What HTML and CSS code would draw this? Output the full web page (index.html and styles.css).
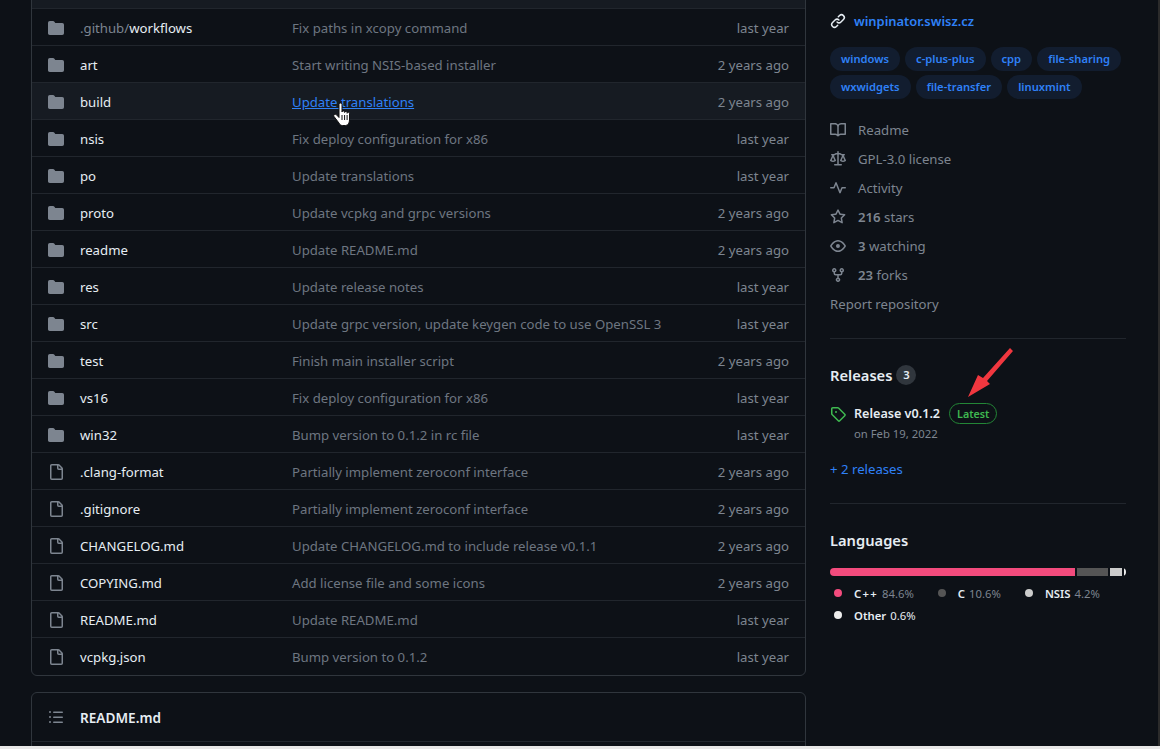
FILE: index.html
```html
<!DOCTYPE html>
<html lang="en">
<head>
<meta charset="utf-8">
<title>Winpinator</title>
<link rel="stylesheet" href="styles.css">
</head>
<body>
<svg class="defs" width="0" height="0" aria-hidden="true">
<symbol id="i-folder" viewBox="0 0 16 16"><path fill="currentColor" d="M1.75 1A1.75 1.75 0 0 0 0 2.75v10.5C0 14.216.784 15 1.75 15h12.5A1.75 1.75 0 0 0 16 13.25v-8.5A1.75 1.75 0 0 0 14.25 3H7.5a.25.25 0 0 1-.2-.1l-.9-1.2C6.07 1.26 5.55 1 5 1H1.75Z"/></symbol>
<symbol id="i-file" viewBox="0 0 16 16"><path fill="currentColor" d="M2 1.75C2 .784 2.784 0 3.75 0h6.586c.464 0 .909.184 1.237.513l2.914 2.914c.329.328.513.773.513 1.237v9.586A1.75 1.75 0 0 1 13.25 16h-9.5A1.75 1.75 0 0 1 2 14.25Zm1.75-.25a.25.25 0 0 0-.25.25v12.5c0 .138.112.25.25.25h9.5a.25.25 0 0 0 .25-.25V6h-2.75A1.75 1.75 0 0 1 9 4.25V1.5Zm6.75.062V4.25c0 .138.112.25.25.25h2.688l-.011-.013-2.914-2.914-.013-.011Z"/></symbol>
</svg>
<div class="page">
  <main class="main">
    <section class="files">
      <div class="files-head"></div>
      <div class="row"><svg class="ic"><use href="#i-folder"/></svg><span class="name"><span class="dim">.github/</span>workflows</span><span class="msg">Fix paths in xcopy command</span><span class="age">last year</span></div>
      <div class="row"><svg class="ic"><use href="#i-folder"/></svg><span class="name">art</span><span class="msg">Start writing NSIS-based installer</span><span class="age">2 years ago</span></div>
      <div class="row hover"><svg class="ic"><use href="#i-folder"/></svg><span class="name">build</span><span class="msg link">Update translations<svg class="cursor" viewBox="0 0 17 24"><path fill="#fff" stroke="#111" stroke-width="1" stroke-linejoin="round" d="M6 2.500a1.500 1.500 0 0 1 3 0V10c0-1.500 2.600-1.500 2.600 0v.500c0-1.400 2.500-1.400 2.500 0v.800c0-1.300 2.400-1.300 2.400.300V18c0 2.800-1.400 5.500-4 5.500H9.500c-1.500 0-2.500-.800-3.300-2.200L1 14.500c-1-1.700 1.200-3 2.500-1.700L6 15.500Z"/><path fill="none" stroke="#111" stroke-width="1" d="M9 13v5M11.600 13v5M14.100 13v5"/></svg></span><span class="age">2 years ago</span></div>
      <div class="row"><svg class="ic"><use href="#i-folder"/></svg><span class="name">nsis</span><span class="msg">Fix deploy configuration for x86</span><span class="age">last year</span></div>
      <div class="row"><svg class="ic"><use href="#i-folder"/></svg><span class="name">po</span><span class="msg">Update translations</span><span class="age">last year</span></div>
      <div class="row"><svg class="ic"><use href="#i-folder"/></svg><span class="name">proto</span><span class="msg">Update vcpkg and grpc versions</span><span class="age">2 years ago</span></div>
      <div class="row"><svg class="ic"><use href="#i-folder"/></svg><span class="name">readme</span><span class="msg">Update README.md</span><span class="age">2 years ago</span></div>
      <div class="row"><svg class="ic"><use href="#i-folder"/></svg><span class="name">res</span><span class="msg">Update release notes</span><span class="age">last year</span></div>
      <div class="row"><svg class="ic"><use href="#i-folder"/></svg><span class="name">src</span><span class="msg">Update grpc version, update keygen code to use OpenSSL 3</span><span class="age">last year</span></div>
      <div class="row"><svg class="ic"><use href="#i-folder"/></svg><span class="name">test</span><span class="msg">Finish main installer script</span><span class="age">2 years ago</span></div>
      <div class="row"><svg class="ic"><use href="#i-folder"/></svg><span class="name">vs16</span><span class="msg">Fix deploy configuration for x86</span><span class="age">last year</span></div>
      <div class="row"><svg class="ic"><use href="#i-folder"/></svg><span class="name">win32</span><span class="msg">Bump version to 0.1.2 in rc file</span><span class="age">last year</span></div>
      <div class="row"><svg class="ic"><use href="#i-file"/></svg><span class="name">.clang-format</span><span class="msg">Partially implement zeroconf interface</span><span class="age">2 years ago</span></div>
      <div class="row"><svg class="ic"><use href="#i-file"/></svg><span class="name">.gitignore</span><span class="msg">Partially implement zeroconf interface</span><span class="age">2 years ago</span></div>
      <div class="row"><svg class="ic"><use href="#i-file"/></svg><span class="name">CHANGELOG.md</span><span class="msg">Update CHANGELOG.md to include release v0.1.1</span><span class="age">2 years ago</span></div>
      <div class="row"><svg class="ic"><use href="#i-file"/></svg><span class="name">COPYING.md</span><span class="msg">Add license file and some icons</span><span class="age">2 years ago</span></div>
      <div class="row"><svg class="ic"><use href="#i-file"/></svg><span class="name">README.md</span><span class="msg">Update README.md</span><span class="age">last year</span></div>
      <div class="row"><svg class="ic"><use href="#i-file"/></svg><span class="name">vcpkg.json</span><span class="msg">Bump version to 0.1.2</span><span class="age">last year</span></div>
    </section>
    <section class="readme">
      <div class="readme-head">
        <svg class="ic toc" viewBox="0 0 16 16"><path fill="currentColor" d="M5.750 2.500h8.500a.75.75 0 0 1 0 1.500h-8.500a.75.75 0 0 1 0-1.500Zm0 5h8.500a.75.75 0 0 1 0 1.500h-8.500a.75.75 0 0 1 0-1.500Zm0 5h8.500a.75.75 0 0 1 0 1.500h-8.500a.75.75 0 0 1 0-1.500ZM2 14a1 1 0 1 1 0-2 1 1 0 0 1 0 2Zm1-6a1 1 0 1 1-2 0 1 1 0 0 1 2 0ZM2 4a1 1 0 1 1 0-2 1 1 0 0 1 0 2Z"/></svg>
        <span class="readme-title">README.md</span>
      </div>
    </section>
  </main>
  <aside class="side">
    <div class="web"><svg class="link-ic" viewBox="0 0 16 16"><path fill="currentColor" d="m7.775 3.275 1.250-1.250a3.500 3.500 0 1 1 4.950 4.950l-2.500 2.500a3.500 3.500 0 0 1-4.950 0 .751.751 0 0 1 .018-1.042.751.751 0 0 1 1.042-.018 1.998 1.998 0 0 0 2.830 0l2.500-2.500a2.002 2.002 0 0 0-2.830-2.830l-1.250 1.250a.751.751 0 0 1-1.042-.018.751.751 0 0 1-.018-1.042Zm-4.690 9.640a1.998 1.998 0 0 0 2.830 0l1.250-1.250a.751.751 0 0 1 1.042.018.751.751 0 0 1 .018 1.042l-1.250 1.250a3.500 3.500 0 1 1-4.950-4.950l2.500-2.500a3.500 3.500 0 0 1 4.950 0 .751.751 0 0 1-.018 1.042.751.751 0 0 1-1.042.018 1.998 1.998 0 0 0-2.830 0l-2.500 2.500a1.998 1.998 0 0 0 0 2.830Z"/></svg><span>winpinator.swisz.cz</span></div>
    <div class="topics">
      <span class="topic">windows</span><span class="topic">c-plus-plus</span><span class="topic">cpp</span><span class="topic">file-sharing</span><span class="topic">wxwidgets</span><span class="topic">file-transfer</span><span class="topic">linuxmint</span>
    </div>
    <ul class="meta">
      <li><svg class="ic" viewBox="0 0 16 16"><path fill="currentColor" d="M0 1.750A.75.75 0 0 1 .75 1h4.253c1.227 0 2.317.590 3 1.501A3.743 3.743 0 0 1 11.006 1h4.245a.75.75 0 0 1 .75.75v10.500a.75.75 0 0 1-.75.75h-4.507a2.250 2.250 0 0 0-1.591.659l-.622.621a.75.75 0 0 1-1.060 0l-.622-.621A2.250 2.250 0 0 0 5.258 13H.75a.75.75 0 0 1-.75-.75Zm7.251 10.324.004-5.073-.002-2.253A2.250 2.250 0 0 0 5.003 2.500H1.500v9h3.757a3.750 3.750 0 0 1 1.994.574ZM8.755 4.750l-.004 7.322a3.752 3.752 0 0 1 1.992-.572H14.500v-9h-3.495a2.250 2.250 0 0 0-2.250 2.250Z"/></svg>Readme</li>
      <li><svg class="ic" viewBox="0 0 16 16"><path fill="currentColor" d="M8.750.750V2h.985c.304 0 .603.080.867.231l1.290.736c.038.022.080.033.124.033h2.234a.75.75 0 0 1 0 1.500h-.427l2.111 4.692a.75.75 0 0 1-.154.838l-.530-.530.529.531-.001.002-.002.002-.006.006-.006.005-.010.010-.045.040c-.210.176-.441.327-.686.450C14.556 10.780 13.880 11 13 11a4.498 4.498 0 0 1-2.023-.454 3.544 3.544 0 0 1-.686-.450l-.045-.040-.016-.015-.006-.006-.004-.004v-.001a.750.750 0 0 1-.154-.838L12.178 4.500h-.162c-.305 0-.604-.079-.868-.231l-1.290-.736a.245.245 0 0 0-.124-.033H8.750V13h2.500a.75.750 0 0 1 0 1.500h-6.500a.75.750 0 0 1 0-1.500h2.500V3.500h-.984a.245.245 0 0 0-.124.033l-1.289.737c-.265.150-.564.230-.869.230h-.162l2.112 4.692a.75.750 0 0 1-.154.838l-.530-.530.529.531-.001.002-.002.002-.006.006-.016.015-.045.040c-.210.176-.441.327-.686.450C4.556 10.780 3.880 11 3 11a4.498 4.498 0 0 1-2.023-.454 3.544 3.544 0 0 1-.686-.450l-.045-.040-.016-.015-.006-.006-.004-.004v-.001a.750.750 0 0 1-.154-.838L2.178 4.500H1.750a.75.75 0 0 1 0-1.500h2.234a.249.249 0 0 0 .125-.033l1.288-.737c.265-.150.564-.230.869-.230h.984V.750a.75.750 0 0 1 1.500 0Zm2.945 8.477c.285.135.718.273 1.305.273s1.020-.138 1.305-.273L13 6.327Zm-10 0c.285.135.718.273 1.305.273s1.020-.138 1.305-.273L3 6.327Z"/></svg>GPL-3.0 license</li>
      <li><svg class="ic" viewBox="0 0 16 16"><path fill="currentColor" d="M6 2c.306 0 .582.187.696.471L10 10.731l1.304-3.260A.751.751 0 0 1 12 7h3.250a.75.75 0 0 1 0 1.500h-2.742l-1.812 4.528a.751.751 0 0 1-1.392 0L6 4.770 4.696 8.030A.75.75 0 0 1 4 8.500H.750a.75.75 0 0 1 0-1.500h2.742l1.812-4.529A.751.751 0 0 1 6 2Z"/></svg>Activity</li>
      <li><svg class="ic" viewBox="0 0 16 16"><path fill="currentColor" d="M8 .250a.75.75 0 0 1 .673.418l1.882 3.815 4.210.612a.75.75 0 0 1 .416 1.279l-3.046 2.970.719 4.192a.751.751 0 0 1-1.088.791L8 12.347l-3.766 1.980a.750.750 0 0 1-1.088-.790l.720-4.194L.818 6.374a.750.750 0 0 1 .416-1.280l4.210-.611L7.327.668A.750.750 0 0 1 8 .250Zm0 2.445L6.615 5.500a.750.750 0 0 1-.564.410l-3.097.450 2.240 2.184a.750.750 0 0 1 .216.664l-.528 3.084 2.769-1.456a.750.750 0 0 1 .698 0l2.770 1.456-.530-3.084a.750.750 0 0 1 .216-.664l2.240-2.183-3.096-.450a.750.750 0 0 1-.564-.410L8 2.694Z"/></svg><b>216</b> stars</li>
      <li><svg class="ic" viewBox="0 0 16 16"><path fill="currentColor" d="M8 2c1.981 0 3.671.992 4.933 2.078 1.270 1.091 2.187 2.345 2.637 3.023a1.620 1.620 0 0 1 0 1.798c-.450.678-1.367 1.932-2.637 3.023C11.670 13.008 9.981 14 8 14c-1.981 0-3.671-.992-4.933-2.078C1.797 10.830.880 9.576.430 8.898a1.620 1.620 0 0 1 0-1.798c.450-.677 1.367-1.931 2.637-3.022C4.330 2.992 6.019 2 8 2ZM1.679 7.932a.120.120 0 0 0 0 .136c.411.622 1.241 1.750 2.366 2.717C5.176 11.758 6.527 12.500 8 12.500c1.473 0 2.825-.742 3.955-1.715 1.124-.967 1.954-2.096 2.366-2.717a.120.120 0 0 0 0-.136c-.412-.621-1.242-1.750-2.366-2.717C10.824 4.242 9.473 3.500 8 3.500c-1.473 0-2.825.742-3.955 1.715-1.124.967-1.954 2.096-2.366 2.717ZM8 10a2 2 0 1 1-.001-3.999A2 2 0 0 1 8 10Z"/></svg><b>3</b> watching</li>
      <li><svg class="ic" viewBox="0 0 16 16"><path fill="currentColor" d="M5 5.372v.878c0 .414.336.750.750.750h4.500a.750.750 0 0 0 .750-.750v-.878a2.250 2.250 0 1 1 1.500 0v.878a2.250 2.250 0 0 1-2.250 2.250h-1.500v2.128a2.251 2.251 0 1 1-1.500 0V8.500h-1.500A2.250 2.250 0 0 1 3.500 6.250v-.878a2.250 2.250 0 1 1 1.500 0ZM5 3.250a.750.750 0 1 0-1.500 0 .750.750 0 0 0 1.500 0Zm6.750.750a.750.750 0 1 0 0-1.500.750.750 0 0 0 0 1.500Zm-3 8.750a.750.750 0 1 0-1.500 0 .750.750 0 0 0 1.500 0Z"/></svg><b>23</b> forks</li>
      <li class="report">Report repository</li>
    </ul>
    <div class="block releases">
      <h2 class="h">Releases <span class="count">3</span></h2>
      <div class="release">
        <svg class="tag" viewBox="0 0 16 16"><path fill="currentColor" d="M1 7.775V2.750C1 1.784 1.784 1 2.750 1h5.025c.464 0 .910.184 1.238.513l6.250 6.250a1.750 1.750 0 0 1 0 2.474l-5.026 5.026a1.750 1.750 0 0 1-2.474 0l-6.250-6.250A1.752 1.752 0 0 1 1 7.775Zm1.500 0c0 .066.026.130.073.177l6.250 6.250a.250.250 0 0 0 .354 0l5.025-5.025a.250.250 0 0 0 0-.354l-6.250-6.250a.250.250 0 0 0-.177-.073H2.750a.250.250 0 0 0-.250.250ZM6 5a1 1 0 1 1 0 2 1 1 0 0 1 0-2Z"/></svg>
        <div>
          <div class="rel-top"><span class="rel-name">Release v0.1.2</span><span class="latest">Latest</span></div>
          <div class="rel-date">on Feb 19, 2022</div>
        </div>
      </div>
      <div class="more">+ 2 releases</div>
      <svg class="arrow" viewBox="0 0 45 50"><path fill="#f0373f" d="M42 0 45 3 19 33 22 36 0 49 10 27 15 30Z"/></svg>
    </div>
    <div class="block langs">
      <h2 class="h">Languages</h2>
      <div class="bar"><i class="b1"></i><i class="b2"></i><i class="b3"></i><i class="b4"></i></div>
      <div class="legend">
        <span class="lg"><i class="dot d1"></i><b class="spaced">C++</b><em>84.6%</em></span>
        <span class="lg"><i class="dot d2"></i><b>C</b><em>10.6%</em></span>
        <span class="lg"><i class="dot d3"></i><b>NSIS</b><em>4.2%</em></span>
        <span class="lg other"><i class="dot d4"></i><b>Other</b><em>0.6%</em></span>
      </div>
    </div>
  </aside>
</div>
<div class="strip-right"></div>
<div class="strip-bottom"></div>
</body>
</html>
```

FILE: styles.css
```css
* { box-sizing: border-box; }
html, body { margin: 0; height: 100%; overflow: hidden; }
body {
  background: #0d1117;
  color: #e6edf3;
  font-family: "Noto Sans", "Open Sans", "Liberation Sans", sans-serif;
  font-size: 13.2px;
  position: relative;
}
.defs { position: absolute; }
.page {
  display: flex;
  align-items: flex-start;
  height: 749px;
  padding-left: 31px;
  margin-top: -28px;
}
.main { width: 775px; flex: none; }
.files {
  border: 1px solid #30363d;
  border-radius: 6px;
  overflow: hidden;
}
.files-head { height: 36px; background: #161b22; border-bottom: 1px solid #21262d; }
.row {
  display: flex;
  align-items: center;
  height: 37px;
  border-top: 1px solid #21262d;
  padding: 2px 16px 0;
}
.files-head + .row { border-top: 0; height: 36px; }
.row:last-child { height: 38px; padding-top: 1px; }
.row.hover { background: #161b22; }
.ic { width: 16px; height: 16px; color: #7d8590; flex: none; fill: currentColor; }
.name { width: 212px; margin-left: 16px; flex: none; color: #e6edf3; white-space: nowrap; }
.dim { color: #7d8590; }
.msg { flex: 1; color: #6e7681; white-space: nowrap; position: relative; }
.msg.link { color: #2f81f7; text-decoration: underline; }
.cursor { position: absolute; left: 41px; top: 9px; width: 17px; height: 24px; }
.age { color: #7d8590; white-space: nowrap; text-align: right; }
.readme {
  margin-top: 16px;
  border: 1px solid #30363d;
  border-radius: 6px 6px 0 0;
  height: 70px;
}
.readme-head {
  display: flex;
  align-items: center;
  height: 49px;
  padding: 0 16px;
  border-bottom: 1px solid #21262d;
}
.readme-title { margin-left: 16px; font-weight: 600; font-size: 13.6px; }
.toc { color: #7d8590; }
.side { width: 296px; margin-left: 24px; flex: none; padding-top: 38px; }
.web { display: flex; align-items: center; gap: 8px; color: #2f81f7; font-weight: 600; font-size: 12.9px; height: 21px; }
.link-ic { width: 16px; height: 16px; color: #e6edf3; }
.topics { display: flex; flex-wrap: wrap; gap: 4px 5px; margin-top: 16px; }
.topic {
  background: #121d2f;
  color: #2f81f7;
  font-size: 11.2px;
  font-weight: 600;
  line-height: 24px;
  height: 24px;
  padding: 0 11px;
  border-radius: 12px;
}
.meta { list-style: none; margin: 16px 0 0; padding: 0 0 20px; border-bottom: 1px solid #21262d; color: #7d8590; }
.meta li { display: flex; align-items: center; height: 29px; white-space: pre; }
.meta .ic { margin-right: 12px; }
.meta b { font-weight: 600; }
.block { position: relative; padding: 24px 0; border-bottom: 1px solid #21262d; }
.langs { border-bottom: 0; }
.h { margin: 0; font-size: 14.7px; font-weight: 600; color: #e6edf3; line-height: 24px; display: flex; align-items: center; gap: 4px; }
.count {
  background: #30363d;
  border-radius: 10px;
  font-size: 11.3px;
  font-weight: 600;
  width: 20px;
  height: 20px;
  line-height: 20px;
  text-align: center;
}
.release { display: flex; gap: 8px; margin-top: 16px; }
.tag { width: 16px; height: 16px; color: #3fb950; flex: none; margin-top: 3px; }
.rel-top { display: flex; align-items: center; gap: 9px; height: 21px; }
.rel-name { font-weight: 600; font-size: 12.6px; }
.latest {
  border: 1px solid #238636;
  color: #3fb950;
  border-radius: 11px;
  font-size: 10.7px;
  font-weight: 600;
  height: 21px;
  line-height: 20px;
  padding: 0 7px;
}
.rel-date { color: #7d8590; font-size: 11.3px; line-height: 18px; margin-top: 1px; }
.more { color: #2f81f7; font-size: 13.2px; line-height: 20px; margin-top: 16px; }
.arrow { position: absolute; left: 138px; top: 9px; width: 45px; height: 50px; }
.bar { display: flex; gap: 2px; height: 8px; margin-top: 16px; border-radius: 4px; overflow: hidden; }
.bar i { display: block; height: 8px; }
.b1 { width: 245px; background: #f34b7d; }
.b2 { width: 31px; background: #555555; }
.b3 { width: 12px; background: #cccccc; }
.b4 { width: 2px; background: #ededed; }
.legend { display: flex; flex-wrap: wrap; margin-top: 6px; font-size: 11.3px; }
.lg { display: flex; align-items: center; height: 22px; margin-right: 20px; white-space: pre; padding-left: 4px; }
.lg b { font-weight: 600; color: #e6edf3; margin-right: 4px; }
.lg .spaced { letter-spacing: 1.3px; }
.lg em { font-style: normal; color: #7d8590; }
.other { width: 100%; }
.other em { color: #e6edf3; }
.dot { width: 8px; height: 8px; border-radius: 50%; margin-right: 12px; }
.d1 { background: #f34b7d; }
.d2 { background: #555555; }
.d3 { background: #cccccc; }
.d4 { background: #ededed; }
.strip-right { position: absolute; top: 0; right: 0; bottom: 0; width: 2px; background: #2b2b2b; }
.strip-bottom { position: absolute; left: 0; right: 0; bottom: 0; height: 3px; background: #e8e8e8; }
```
